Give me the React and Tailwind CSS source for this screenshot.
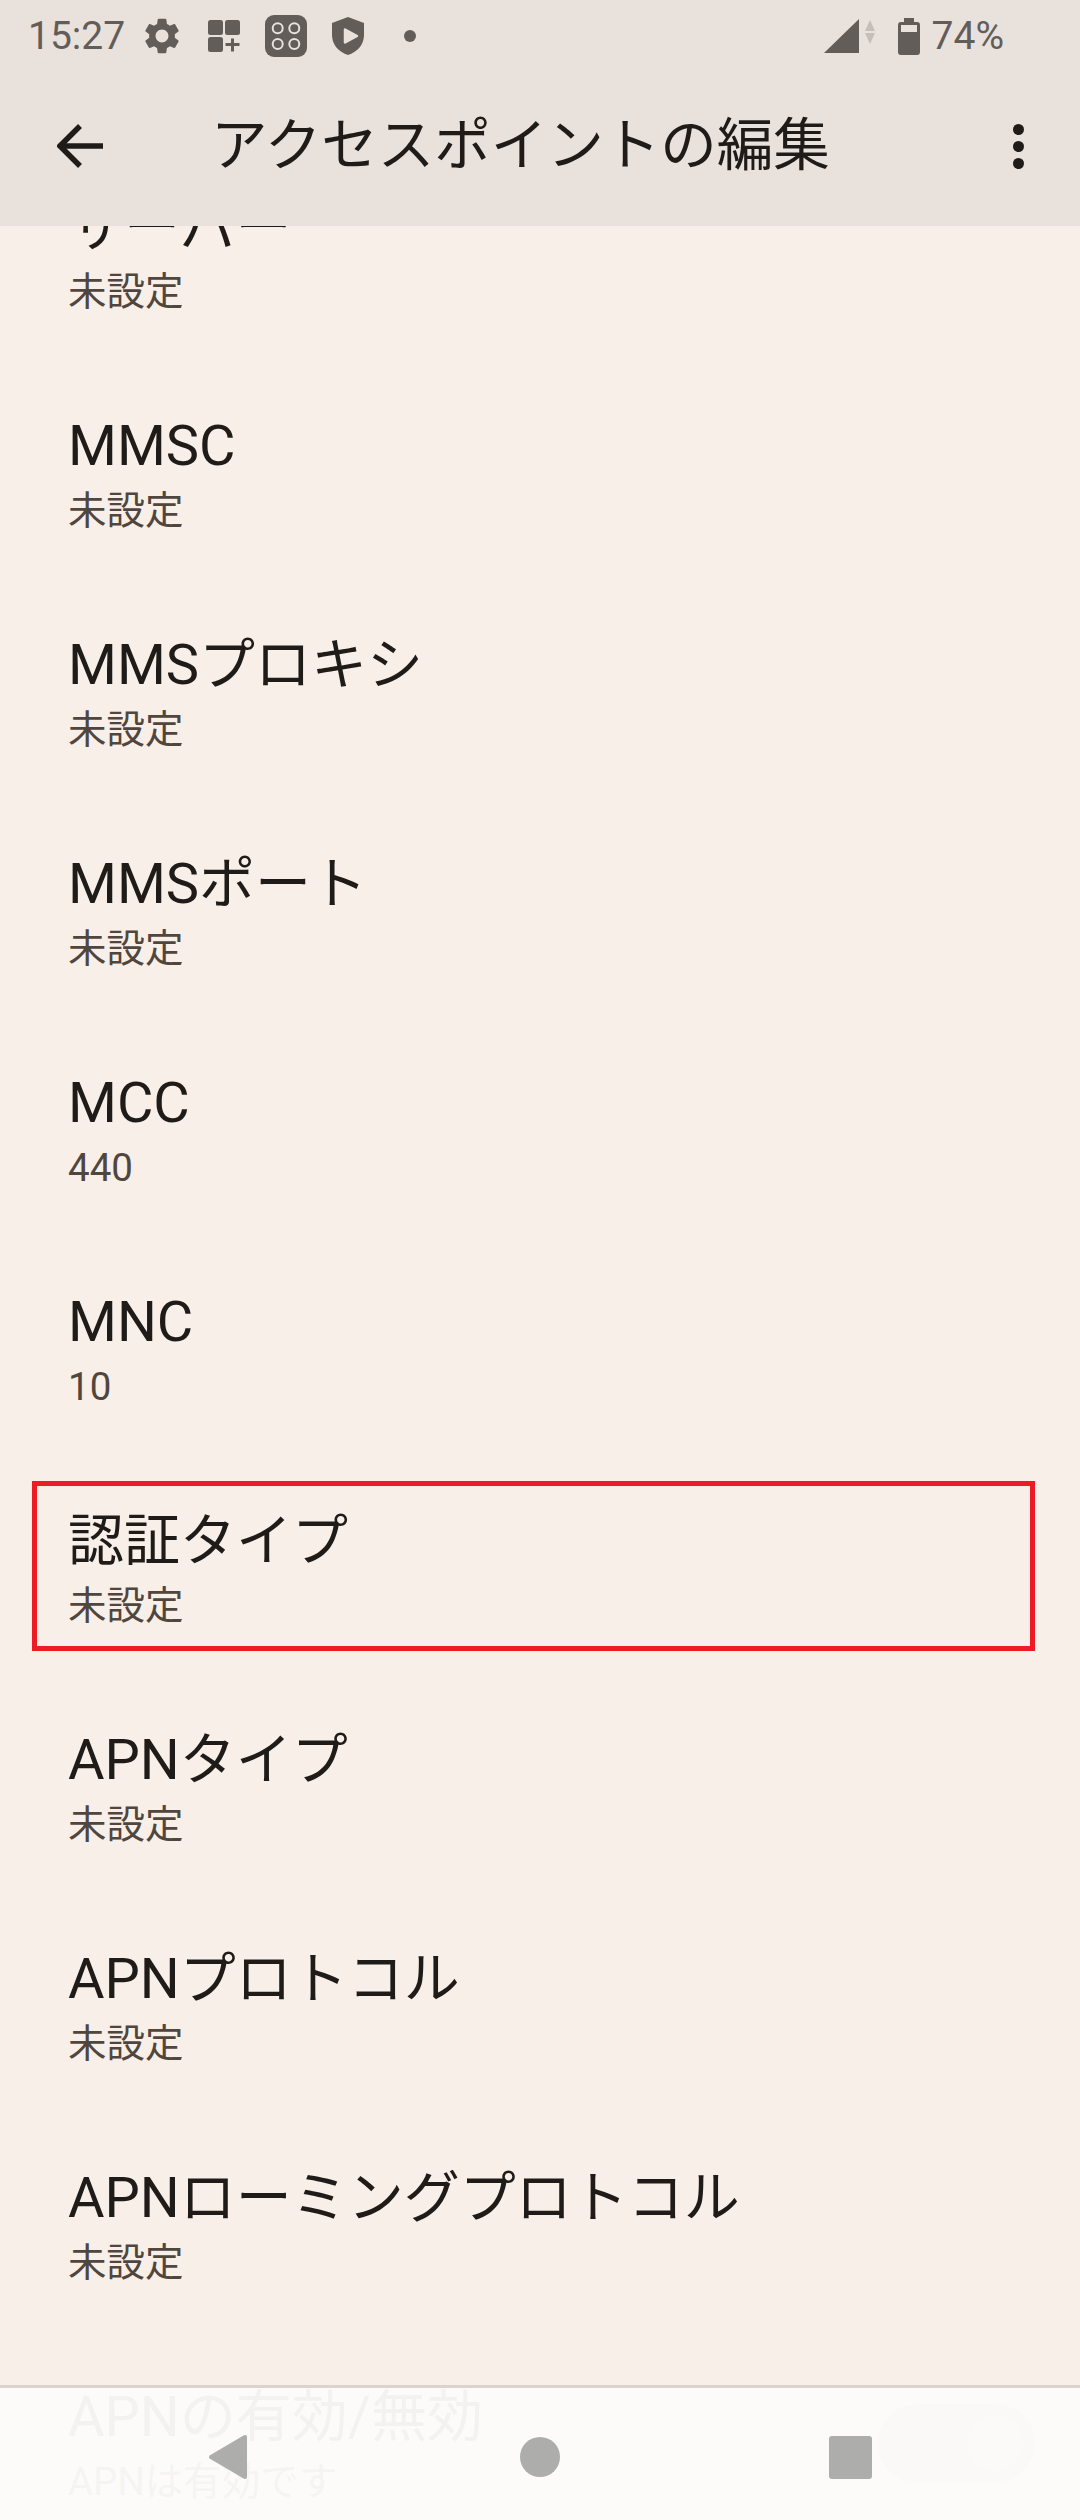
import React from 'react'

const FONT = "font-['Roboto','Noto_Sans_CJK_JP',sans-serif]"

const rows = [
  { title: 'サーバー', value: '未設定' },
  { title: 'MMSC', value: '未設定' },
  { title: 'MMSプロキシ', value: '未設定' },
  { title: 'MMSポート', value: '未設定' },
  { title: 'MCC', value: '440' },
  { title: 'MNC', value: '10' },
  { title: '認証タイプ', value: '未設定', marked: true },
  { title: 'APNタイプ', value: '未設定' },
  { title: 'APNプロトコル', value: '未設定' },
  { title: 'APNローミングプロトコル', value: '未設定' },
  { title: 'APNの有効/無効', value: 'APNは有効です', toggle: true },
]

const StatusIcons = () => (
  <>
    <svg className="ml-[21px] w-[34px] h-[36px] fill-[#625d59]" viewBox="2.5 2 19 20">
      <path d="M19.14 12.94c.04-.3.06-.61.06-.94 0-.32-.02-.64-.07-.94l2.03-1.58c.18-.14.23-.41.12-.61l-1.92-3.32c-.12-.22-.37-.29-.59-.22l-2.39.96c-.5-.38-1.03-.7-1.62-.94l-.36-2.54c-.04-.24-.24-.41-.48-.41h-3.84c-.24 0-.43.17-.47.41l-.36 2.54c-.59.24-1.13.57-1.62.94l-2.39-.96c-.22-.08-.47 0-.59.22L2.74 8.87c-.12.21-.08.47.12.61l2.03 1.58c-.05.3-.09.63-.09.94s.02.64.07.94l-2.03 1.58c-.18.14-.23.41-.12.61l1.92 3.32c.12.22.37.29.59.22l2.39-.96c.5.38 1.03.7 1.62.94l.36 2.54c.05.24.24.41.48.41h3.84c.24 0 .44-.17.47-.41l.36-2.54c.59-.24 1.13-.56 1.62-.94l2.39.96c.22.08.47 0 .59-.22l1.92-3.32c.12-.22.07-.47-.12-.61l-2.01-1.58zM12 15.6c-1.98 0-3.6-1.62-3.6-3.6s1.62-3.6 3.6-3.6 3.6 1.62 3.6 3.6-1.62 3.6-3.6 3.6z" />
    </svg>
    <svg className="ml-[29px] w-[32px] h-[32px] fill-[#625d59]" viewBox="0 0 32 32">
      <rect x="0" y="0" width="15" height="15" rx="2.5" />
      <rect x="17" y="0" width="15" height="15" rx="2.5" />
      <rect x="0" y="17" width="15" height="15" rx="2.5" />
      <path d="M23 18.5h3V23h5.5v3H26v5.5h-3V26h-5.5v-3H23z" />
    </svg>
    <svg className="ml-[25px] w-[42px] h-[42px]" viewBox="0 0 42 42">
      <rect width="42" height="42" rx="9" fill="#625d59" />
      <g fill="none" stroke="#e9e1dc" strokeWidth="2">
        <circle cx="12.7" cy="13.3" r="5" />
        <circle cx="29.3" cy="13.3" r="5" />
        <circle cx="12.7" cy="29" r="5" />
        <circle cx="29.3" cy="29" r="5" />
      </g>
    </svg>
    <svg className="ml-[25px] w-[32px] h-[38px]" viewBox="0 0 32 38">
      <path d="M16 0 32 6V18C32 28 25 35 16 38 7 35 0 28 0 18V6Z" fill="#625d59" />
      <path d="M13 12.5 25 19 13 25.5Z" fill="#e9e1dc" stroke="#e9e1dc" strokeWidth="2.5" strokeLinejoin="round" />
    </svg>
    <span className="ml-[40px] w-[12px] h-[12px] rounded-full bg-[#625d59]" />
  </>
)

const StatusBar = () => (
  <div className={`h-[72px] flex items-center pl-[28px] pr-[76px] text-[#625d59] ${FONT}`}>
    <span className="text-[39px] leading-none w-[96px]">15:27</span>
    <StatusIcons />
    <svg className="ml-auto w-[51px] h-[36px]" viewBox="0 0 51 36">
      <path d="M0 35 35 1V35Z" fill="#625d59" />
      <path d="M46 2 51 13H41Z" fill="#c5bfbb" />
      <path d="M41 15H51L46 26Z" fill="#c5bfbb" />
    </svg>
    <svg className="ml-[23px] w-[22px] h-[37px]" viewBox="0 0 22 37">
      <path d="M6 0H16V4H19Q22 4 22 7V34Q22 37 19 37H3Q0 37 0 34V7Q0 4 3 4H6Z" fill="#625d59" />
      <rect x="3" y="7" width="16" height="7" fill="#e9e1dc" />
    </svg>
    <span className="ml-[12px] text-[39px] leading-none">74%</span>
  </div>
)

const Toolbar = () => (
  <div className={`h-[154px] flex items-center pl-[57px] pr-[56px] pb-[6px] text-[#1e1b18] ${FONT}`}>
    <svg className="w-[46px] h-[46px]" viewBox="0 0 46 46" fill="none" stroke="#1e1b18" strokeWidth="5.5">
      <path d="M46 23H4" />
      <path d="M23 3 3 23 23 43" />
    </svg>
    <h1 className="ml-[108px] text-[56.5px] leading-none font-normal">アクセスポイントの編集</h1>
    <div className="ml-auto flex flex-col gap-[6px]">
      <span className="w-[11px] h-[11px] rounded-full bg-[#1e1b18]" />
      <span className="w-[11px] h-[11px] rounded-full bg-[#1e1b18]" />
      <span className="w-[11px] h-[11px] rounded-full bg-[#1e1b18]" />
    </div>
  </div>
)

const Row = ({ title, value, marked, toggle }) => (
  <div className="relative h-[219px] flex items-center justify-between pl-[68px] pr-[45px]">
    <div className="pt-[6px]">
      <div className="text-[56px] leading-[66px] text-[#1e1b18]">{title}</div>
      <div className="mt-[7px] text-[38.5px] leading-[50px] text-[#50463e]">{value}</div>
    </div>
    {toggle && (
      <div className="w-[157px] h-[78px] rounded-full bg-[#d8cdc6] flex items-center justify-end pr-[12px]">
        <span className="w-[56px] h-[56px] rounded-full bg-[#e4dad3]" />
      </div>
    )}
    {marked && (
      <div className="absolute left-[32px] top-[24px] w-[1003px] h-[170px] border-[5px] border-[#ed1c24]" />
    )}
  </div>
)

const NavBar = () => (
  <div className="absolute left-0 bottom-0 w-full h-[135px] border-t-[3px] border-[#dcd3cd] bg-[#fcfbfa]/96 flex items-center pl-[208px] pt-[6px]">
    <svg className="w-[40px] h-[46px]" viewBox="0 0 40 46">
      <path d="M37 3V43L3 23Z" fill="#adadab" stroke="#adadab" strokeWidth="4" strokeLinejoin="round" />
    </svg>
    <span className="ml-[272px] w-[40px] h-[40px] rounded-full bg-[#adadab]" />
    <span className="ml-[269px] w-[43px] h-[43px] rounded-[3px] bg-[#adadab]" />
  </div>
)

export default function App() {
  return (
    <div className={`relative h-[2520px] w-[1080px] overflow-hidden flex flex-col bg-[#f8efe9] ${FONT}`}>
      <div className="bg-[#e9e1dc] z-10">
        <StatusBar />
        <Toolbar />
      </div>
      <div className="-mt-[83px]">
        {rows.map((row) => (
          <Row key={row.title} {...row} />
        ))}
      </div>
      <NavBar />
    </div>
  )
}
